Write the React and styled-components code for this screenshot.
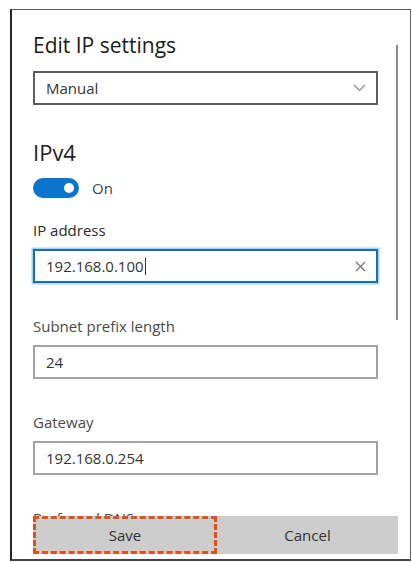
import React from "react";
import styled, { createGlobalStyle } from "styled-components";

const Global = createGlobalStyle`
  html, body { margin: 0; padding: 0; background: #fff; }
  body { font-family: "Open Sans", "Noto Sans", sans-serif; color: #333; }
`;

const Frame = styled.div`
  box-sizing: border-box;
  margin: 9px 0 0 10px;
  width: 401px;
  height: 552px;
  border-style: solid;
  border-color: #5a5a5a #666 #444 #262626;
  border-width: 1px 1px 2px 2px;
  display: flex;
  flex-direction: column;
  background: #fff;
`;

const ScrollArea = styled.div`
  height: 506px;
  flex-shrink: 0;
  overflow: hidden;
  display: flex;
  align-items: flex-start;
`;

const Content = styled.div`
  width: 345px;
  margin-left: 21px;
  flex-shrink: 0;
  display: block;
`;

const ScrollTrack = styled.div`
  margin-left: 18px;
  width: 2px;
`;

const ScrollThumb = styled.div`
  margin-top: 35px;
  height: 275px;
  width: 2px;
  background: #8c8c8c;
`;

const Title = styled.h1`
  margin: 21px 0 0;
  font-size: 21px;
  line-height: 28px;
  font-weight: 400;
  color: #1b1b1b;
`;

const Select = styled.div`
  box-sizing: border-box;
  margin-top: 12px;
  height: 34px;
  border: 2px solid #5e5e5e;
  padding: 0 10px 0 11px;
  display: flex;
  align-items: center;
  justify-content: space-between;
  font-size: 15px;
  color: #333;
`;

const Heading = styled.h2`
  margin: 32px 0 0;
  font-size: 22px;
  line-height: 30px;
  font-weight: 400;
  color: #222;
`;

const ToggleRow = styled.div`
  margin-top: 11px;
  height: 20px;
  display: flex;
  align-items: center;
  gap: 13px;
  font-size: 15px;
  color: #444;
`;

const Toggle = styled.div`
  box-sizing: border-box;
  width: 46px;
  height: 20px;
  border-radius: 10px;
  background: #0b74cf;
  display: flex;
  align-items: center;
  justify-content: flex-end;
  padding-right: 5px;
`;

const Knob = styled.div`
  width: 10px;
  height: 10px;
  border-radius: 50%;
  background: #fff;
`;

const Fields = styled.div`
  margin-top: 22px;
  display: flex;
  flex-direction: column;
  gap: 33px;
`;

const Field = styled.div`
  display: flex;
  flex-direction: column;
  gap: 9px;
  flex-shrink: 0;
`;

const Label = styled.div`
  font-size: 15px;
  line-height: 20px;
  color: ${(p) => (p.$dark ? "#2a2a2a" : "#4a4a4a")};
`;

const Input = styled.div`
  box-sizing: border-box;
  height: 34px;
  flex-shrink: 0;
  border: 2px solid ${(p) => (p.$focused ? "#1b6ea6" : "#a2a2a2")};
  box-shadow: ${(p) => (p.$focused ? "0 0 0 1.5px #a6d6f2" : "none")};
  padding: 0 10px 0 11px;
  display: flex;
  align-items: center;
  font-size: 15px;
  color: #333;
`;

const Caret = styled.span`
  display: inline-block;
  width: 1px;
  height: 17px;
  background: #333;
  margin-left: 1px;
`;

const Spacer = styled.div`
  flex: 1;
`;

const Footer = styled.div`
  margin: 0 12px 0 21px;
  height: 38px;
  flex-shrink: 0;
  display: grid;
  grid-template-columns: 184px 1fr;
  background: #cdcdcd;
`;

const Button = styled.div`
  box-sizing: border-box;
  display: flex;
  align-items: center;
  justify-content: center;
  font-size: 15px;
  color: #333;
  border: ${(p) => (p.$focused ? "3px dashed #e0521a" : "none")};
`;

const Chevron = () => (
  <svg width="13" height="8" viewBox="0 0 13 8">
    <polyline points="1,1 6.5,6.5 12,1" fill="none" stroke="#8a8a8a" strokeWidth="1.2" />
  </svg>
);

const Close = () => (
  <svg width="11" height="11" viewBox="0 0 11 11">
    <path d="M1 1 L10 10 M10 1 L1 10" stroke="#7a7a7a" strokeWidth="1.4" />
  </svg>
);

export default function App() {
  return (
    <>
      <Global />
      <Frame>
        <ScrollArea>
          <Content>
            <Title>Edit IP settings</Title>
            <Select>
              <span>Manual</span>
              <Chevron />
            </Select>
            <Heading>IPv4</Heading>
            <ToggleRow>
              <Toggle>
                <Knob />
              </Toggle>
              <span>On</span>
            </ToggleRow>
            <Fields>
              <Field>
                <Label $dark>IP address</Label>
                <Input $focused>
                  <span>192.168.0.100</span>
                  <Caret />
                  <Spacer />
                  <Close />
                </Input>
              </Field>
              <Field>
                <Label>Subnet prefix length</Label>
                <Input>24</Input>
              </Field>
              <Field>
                <Label>Gateway</Label>
                <Input>192.168.0.254</Input>
              </Field>
              <Field>
                <Label>Preferred DNS</Label>
                <Input></Input>
              </Field>
            </Fields>
          </Content>
          <ScrollTrack>
            <ScrollThumb />
          </ScrollTrack>
        </ScrollArea>
        <Footer>
          <Button $focused>Save</Button>
          <Button>Cancel</Button>
        </Footer>
      </Frame>
    </>
  );
}
